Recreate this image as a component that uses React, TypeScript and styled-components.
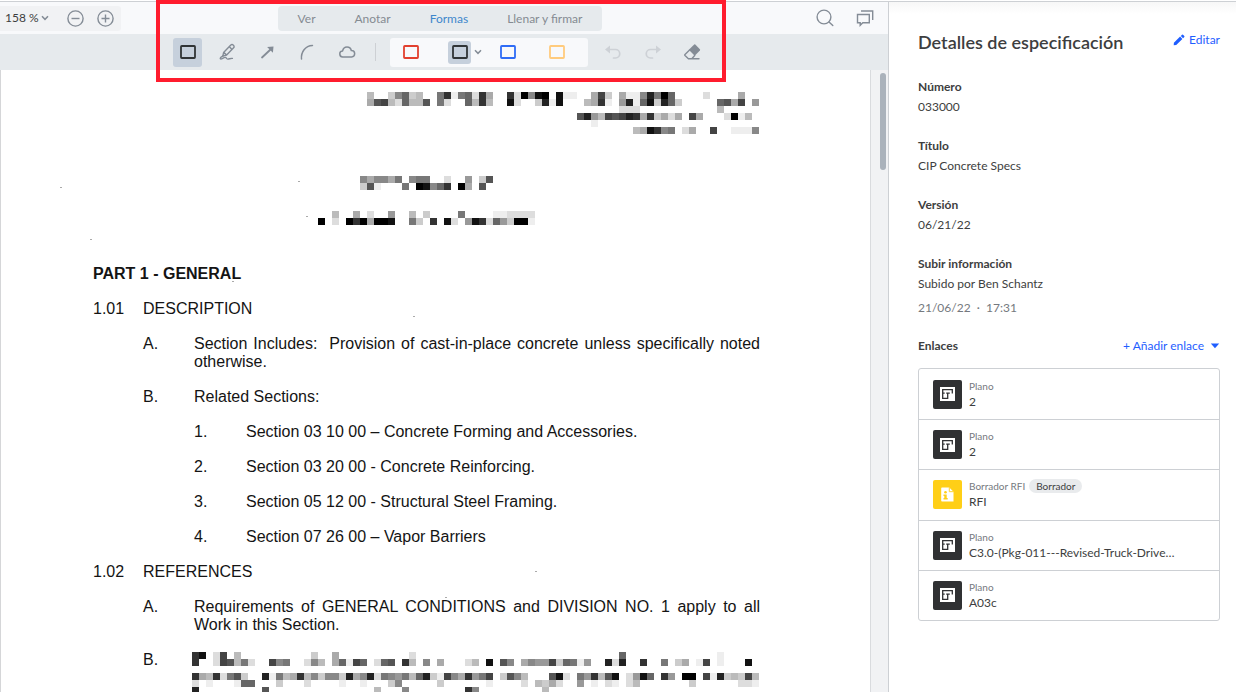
import React from "react";
import styled, { createGlobalStyle } from "styled-components";

const colors = {
  icon: "#848c96",
  iconOff: "#cdd1d6",
  ink: "#3d3e40",
  muted: "#75797e",
  link: "#1f5eff",
  bar: "#e6eaed",
  barLight: "#f8f9fb",
  line: "#cdd0d4",
  active: "#c6d0dc",
};

const Global = createGlobalStyle`
  * { box-sizing: border-box; }
  body { margin: 0; background: #fff; color: ${colors.ink}; font-family: Lato, "Noto Sans", sans-serif; font-size: 12px; line-height: 16px; }
  button { border: 0; padding: 0; background: none; font: inherit; color: inherit; cursor: pointer; }
  svg { display: block; flex: none; }
  h1, h2, h3, p, dl, dd, ul, ol { margin: 0; padding: 0; }
  ul, ol { list-style: none; }
`;

const Shell = styled.div`
  display: grid;
  grid-template-columns: minmax(0, 1fr) 348px;
  height: 100vh;
  padding: 1px 0 5px;
`;

const Viewer = styled.main`
  position: relative;
  display: flex;
  flex-direction: column;
  min-height: 0;
  border-top: 1px solid ${colors.line};
`;

const TopBar = styled.header`
  display: flex;
  align-items: center;
  height: 32px;
  padding-right: 8px;
  background: ${colors.barLight};
`;

const Side = styled.div`
  display: flex;
  flex: 1;
  align-items: center;
`;

const Actions = styled(Side)`
  gap: 22px;
  justify-content: flex-end;
  & > :last-child { margin-right: 6px; }
`;

const ZoomGroup = styled.div`
  display: flex;
  align-items: center;
  height: 25px;
  padding: 0 7px 0 5px;
  border-radius: 0 3px 3px 0;
  background: #f1f2f4;
`;

const ZoomLevel = styled.button`
  display: flex;
  align-items: center;
  gap: 2px;
  margin-right: 18px;
  white-space: nowrap;
`;

const ZoomStep = styled.button`
  width: 17px;
  height: 17px;
  & + & { margin-left: 13px; }
`;

const Tabs = styled.nav`
  display: flex;
  gap: 39px;
  align-items: center;
  height: 25px;
  padding: 1px 20px 0;
  border-radius: 4px;
  background: ${colors.bar};
`;

const Tab = styled.button<{ $on?: boolean }>`
  color: ${(p) => (p.$on ? "#3e87cc" : "#858b92")};
  white-space: nowrap;
`;

const ToolBar = styled.div`
  display: flex;
  align-items: center;
  justify-content: center;
  height: 36px;
  padding-right: 8px;
  background: ${colors.bar};
`;

const ToolSet = styled.div`
  display: flex;
  gap: 11px;
`;

const Tool = styled.button<{ $on?: boolean }>`
  display: grid;
  place-items: center;
  width: 29px;
  height: 29px;
  border-radius: 3px;
  background: ${(p) => (p.$on ? colors.active : "transparent")};
`;

const Separator = styled.span`
  width: 1px;
  height: 18px;
  margin: 0 14px 0 13px;
  background: ${colors.line};
`;

const Palette = styled.div`
  display: flex;
  align-items: center;
  gap: 26px;
  height: 29px;
  margin-right: 10px;
  padding: 0 20px 0 9px;
  border-radius: 3px;
  background: ${colors.barLight};
`;

const SwatchPick = styled.div`
  display: flex;
  align-items: center;
  gap: 3px;
  margin-right: -12px;
`;

const SwatchButton = styled.button<{ $on?: boolean }>`
  display: grid;
  place-items: center;
  width: 23px;
  height: 23px;
  border-radius: 3px;
  background: ${(p) => (p.$on ? colors.active : "transparent")};
`;

const Highlight = styled.div`
  position: absolute;
  top: -2px;
  left: calc(50% - 288px);
  width: 570px;
  height: 82px;
  border: 4px solid #ff1c2e;
  pointer-events: none;
`;

const DocumentArea = styled.div`
  display: flex;
  flex: 1;
  min-height: 0;
  border-left: 1px solid #d5d6d8;
`;

const Sheet = styled.article`
  position: relative;
  flex: 1;
  overflow: hidden;
  padding: 22px 110px 0 92px;
  color: #141414;
  font: 16px/18px "Liberation Sans", Arial, sans-serif;
`;

const Specks = styled.svg`
  position: absolute;
  top: 0;
  left: 0;
`;

const ScrollTrack = styled.div`
  width: 18px;
  padding: 3px 2px 0 9px;
  border-left: 1px solid #d9dbde;
  background: #f1f2f4;
`;

const ScrollThumb = styled.div`
  width: 6px;
  height: 97px;
  border-radius: 3px;
  background: #aab2bb;
`;

const Letterhead = styled.div`
  display: flex;
  flex-direction: column;
  align-items: flex-end;
  padding-right: 1px;
`;

const TitleBlock = styled.div`
  display: flex;
  flex-direction: column;
  align-items: center;
  gap: 21px;
  padding: 42px 0 40px;
`;

const PartTitle = styled.h2`
  font-size: 16px;
  line-height: 18px;
  font-weight: 700;
`;

const Clause = styled.div<{ $level: number }>`
  display: grid;
  grid-template-columns: ${(p) => (p.$level === 0 ? "50px" : p.$level === 1 ? "51px" : "52px")} minmax(0, 1fr);
  margin-top: 17px;
  padding-left: ${(p) => [0, 50, 101][p.$level]}px;
  text-align: justify;
`;

const Redacted = styled.div`
  padding-top: 1px;
  margin-left: -2px;
`;

const Panel = styled.aside`
  border-top: 1px solid ${colors.line};
  border-left: 1px solid ${colors.line};
  padding: 28px 16px 0 29px;
  background: linear-gradient(#f7f7f7, #fff 12px);
`;

const PanelHead = styled.div`
  display: flex;
  align-items: flex-start;
  justify-content: space-between;
  height: 49px;
`;

const PanelTitle = styled.h1`
  font-size: 18px;
  line-height: 24px;
  font-weight: 600;
  white-space: nowrap;
`;

const LinkButton = styled.button<{ $gap: number }>`
  display: flex;
  align-items: center;
  gap: ${(p) => p.$gap}px;
  padding: 2px 0;
  color: ${colors.link};
  white-space: nowrap;
`;

const Field = styled.div`
  & + & { margin-top: 23px; }
`;

const Term = styled.dt`
  margin-bottom: 4px;
  font-weight: 700;
`;

const Value = styled.dd<{ $muted?: boolean }>`
  color: ${(p) => (p.$muted ? colors.muted : colors.ink)};
  & + & { margin-top: 8px; }
`;

const LinksHead = styled.div`
  display: flex;
  align-items: center;
  justify-content: space-between;
  margin: 20px 0 12px;
`;

const LinksTitle = styled.h3`
  font-size: 12px;
  line-height: 16px;
  font-weight: 700;
`;

const LinkList = styled.ul`
  display: grid;
  grid-auto-rows: 1fr;
  min-height: 253px;
  border: 1px solid ${colors.line};
  border-radius: 3px;
`;

const LinkRow = styled.li`
  display: flex;
  align-items: center;
  gap: 7px;
  min-width: 0;
  padding: 0 14px;
  & + & { border-top: 1px solid ${colors.line}; }
`;

const Tile = styled.span<{ $color: string }>`
  display: grid;
  flex: none;
  place-items: center;
  width: 29px;
  height: 29px;
  border-radius: 2px;
  background: ${(p) => p.$color};
`;

const LinkText = styled.div`
  min-width: 0;
`;

const Kind = styled.div`
  display: flex;
  align-items: center;
  gap: 4px;
  margin-bottom: 1px;
  color: ${colors.muted};
  font-size: 10px;
  line-height: 14px;
`;

const Badge = styled.span`
  padding: 0 7px;
  border-radius: 7px;
  background: #e9ebed;
  color: ${colors.ink};
`;

const LinkName = styled.a`
  display: block;
  color: inherit;
  text-decoration: none;
  white-space: nowrap;
`;

/* Pixelated redaction: one hex digit per 7px cell, "f" is blank paper. */
const CELL = 7;
function Mosaic({ rows, label }: { rows: string[]; label: string }) {
  const columns = Math.max(...rows.map((r) => r.length));
  return (
    <svg width={columns * CELL} height={rows.length * CELL} shapeRendering="crispEdges" role="img" aria-label={label}>
      {rows.flatMap((row, y) =>
        [...row].map((c, x) =>
          c === "f" ? null : (
            <rect key={`${x}-${y}`} x={x * CELL} y={y * CELL} width={CELL} height={CELL} fill={`#${c.repeat(3)}`} />
          ),
        ),
      )}
    </svg>
  );
}

const blank = (n: number) => "f".repeat(n);

const letterhead = [
  "bffc86cbff73e76d3aff3d0810f1eeffa4cfaee82706ffffdffffaff",
  "a54bd6bb5f7dff6b3bff1dffc2e1fffba3ef92e61c26cfffff65a4f9",
  blank(36) + "ddd" + blank(11) + "bfffff",
  blank(30) + "529b45423a3cadaf4afffd0ebf",
  blank(32) + "e" + blank(23),
  blank(38) + "ba1387fdaff4ffeee8",
];
const titleLine = ["8a88a7f877ffdff9fc5", "c5efff7f01863f0af5f"];
const subtitleLine = ["ffbffafdff9ffbfcffff7ffffeedddd", "0fdf030a001ff7cf3f1df913d69c00e"];
const paragraph = [
  "31fd4fb" + blank(10) + "cffa" + blank(10) + "d" + blank(29) + "6" + blank(13) + "efffff",
  "3ffd45b7dff487ffd8bfa6e46fd65f3bf8fafffdbf1f58fa8994c67e9ff2d2ff3ff7fcafe4fefff1f",
  blank(81),
  "3ab3d75cff2e7ba3b8c88c2a82d7897b62ce48a3974fc58bfff51df793b51fd916f39f00f4e2cbc4b",
  "dfefffe66fffcfffdffffeffefffc8fffffcffffffeffffdfbcadff9fefdefdbfffffffcffffffdde".slice(0, 81),
  "2" + blank(9) + "5" + blank(15) + "b" + "fff" + "8" + blank(8) + "38" + blank(9) + "b",
].map((row) => row.padEnd(81, "f"));

const Chevron = () => (
  <svg width="8" height="6" viewBox="0 0 8 6" fill="none" stroke={colors.icon} strokeWidth="1.5">
    <path d="M1 1.2 4 4.3 7 1.2" />
  </svg>
);

const Step = ({ plus }: { plus?: boolean }) => (
  <svg width="17" height="17" viewBox="0 0 17 17" fill="none" stroke={colors.icon} strokeWidth="1.4">
    <circle cx="8.5" cy="8.5" r="7.6" />
    <path d={plus ? "M4.5 8.5h8M8.5 4.5v8" : "M4.5 8.5h8"} />
  </svg>
);

const Swatch = ({ color }: { color: string }) => (
  <svg width="16" height="14" viewBox="0 0 16 14" fill="none" stroke={color} strokeWidth="1.8">
    <rect x="1" y="1" width="14" height="12" rx="0.8" />
  </svg>
);

const Stroke = ({ children }: { children: React.ReactNode }) => (
  <svg width="18" height="18" viewBox="0 0 18 18" fill="none" stroke={colors.icon} strokeWidth="1.4" strokeLinecap="round" strokeLinejoin="round">
    {children}
  </svg>
);

const ScribbleIcon = () => (
  <Stroke>
    <path d="M4.6 9.6 11.8 2.1a1.6 1.6 0 0 1 2.4 0l.4.4a1.6 1.6 0 0 1 0 2.3L7.6 12l-3.8 1.2zM10.4 3.8l2.6 2.6M5 9.6l2.6 2.4" />
    <path d="M4 12.8C1.9 14 .8 15 1.4 15.8c.9 1.1 3.1-1.6 5-1.4 1.2.2.9 1.6 2.2 1.7 1.5.1 2.8-.9 4.8-.7" />
  </Stroke>
);

const ArrowIcon = () => (
  <Stroke>
    <path d="M3 14.5 11.5 6.5" strokeWidth="1.8" />
    <path d="M8.1 4 14.5 3.4 13.9 9.8z" fill={colors.icon} stroke="none" />
  </Stroke>
);

const ArcIcon = () => (
  <Stroke>
    <path d="M2.5 16C1.8 9 6.3 2.7 13.5 2.4" strokeWidth="1.5" />
  </Stroke>
);

const CloudIcon = () => (
  <Stroke>
    <path d="M4 13.9a3 3 0 0 1-.4-6C4.1 5.4 5.7 3.9 8 3.9c2.2 0 3.9 1.5 4.3 3.6a3.2 3.2 0 0 1 .3 6.4z" strokeWidth="1.5" />
  </Stroke>
);

const UndoIcon = ({ flip }: { flip?: boolean }) => (
  <svg width="18" height="18" viewBox="0 0 18 18" fill="none" stroke={colors.iconOff} strokeWidth="1.7" strokeLinecap="round">
    <g transform={flip ? "matrix(-1 0 0 1 18 0)" : undefined}>
      <path d="M5 6.5h6.500a4.200 4.200 0 0 1 0 8.500H9.500" />
      <path d="M1 6.500 6 2.400v8.200z" fill={colors.iconOff} stroke="none" />
    </g>
  </svg>
);

const EraserIcon = () => (
  <Stroke>
    <path d="M4.8 6.8 10.2 1.6a.8.8 0 0 1 1.1 0l4.6 4.7a.8.8 0 0 1 0 1.1l-5.2 5.3z" fill={colors.icon} stroke="none" />
    <path d="M5.3 7.2 1 11.4a.8.8 0 0 0 0 1.1l3.4 3.2h3.4l2.9-3.1M7 15.8h8" />
  </Stroke>
);

const SearchIcon = () => (
  <Stroke>
    <circle cx="8" cy="8" r="6.9" />
    <path d="m13 13 3.8 3.6" />
  </Stroke>
);

const CommentsIcon = () => (
  <Stroke>
    <path d="M1.500 5.500h11.800v8.300H6.800L4.200 16.300v-2.500H1.500zM5 2h11.700v9" strokeLinecap="butt" strokeLinejoin="miter" />
  </Stroke>
);

const PencilIcon = () => (
  <svg width="12" height="12" viewBox="0 0 12 12" fill={colors.link}>
    <path d="M.7 11.300.9 8.800 7.100 2.600l2.300 2.300-6.200 6.200zM7.800 1.900 9 .7q.5-.4 1 0l1.300 1.300q.4.5 0 1L10.100 4.200z" />
  </svg>
);

const CaretIcon = () => (
  <svg width="10" height="6" viewBox="0 0 10 6" fill={colors.link}>
    <path d="M.8.5h8.400L5 5.300z" />
  </svg>
);

const PlanIcon = () => (
  <svg width="15" height="14" viewBox="0 0 15 14" fill="none" stroke="#303133" strokeWidth="1.3">
    <rect width="15" height="14" fill="#fff" stroke="none" />
    <path d="M12.3 6.5V2.7H2.7v8.6h5V6.2M2.7 6.2h2M6.2 6.2h3.6" />
  </svg>
);

const RfiIcon = () => (
  <svg width="13" height="15" viewBox="0 0 13 15">
    <path d="M1 .5h7.3L12.5 4.7V14.5H1a.8.8 0 0 1-.8-.8V1.3A.8.8 0 0 1 1 .5z" fill="#fff" />
    <path d="M8.3.5v4.2h4.2" fill="none" stroke="#ffcf17" strokeWidth=".9" />
    <circle cx="4.5" cy="5.3" r="1.3" fill="#ffcf17" />
    <path d="M2.5 7.5h3.2v3.6h1v1.4H2.5v-1.4h.8V8.9h-.8z" fill="#ffcf17" />
  </svg>
);

const tools = [
  { name: "Rectángulo", icon: <Swatch color="#303436" />, on: true },
  { name: "Lápiz", icon: <ScribbleIcon /> },
  { name: "Flecha", icon: <ArrowIcon /> },
  { name: "Arco", icon: <ArcIcon /> },
  { name: "Nube", icon: <CloudIcon /> },
];

const fields = [
  { term: "Número", value: "033000" },
  { term: "Título", value: "CIP Concrete Specs" },
  { term: "Versión", value: "06/21/22" },
];

const links = [
  { kind: "Plano", name: "2" },
  { kind: "Plano", name: "2" },
  { kind: "Borrador RFI", name: "RFI", badge: "Borrador" },
  { kind: "Plano", name: "C3.0-(Pkg-011---Revised-Truck-Drive…" },
  { kind: "Plano", name: "A03c" },
];

const clauses = [
  { level: 0, mark: "1.01", text: "DESCRIPTION" },
  { level: 1, mark: "A.", text: "Section Includes:\u00a0 Provision of cast-in-place concrete unless specifically noted otherwise." },
  { level: 1, mark: "B.", text: "Related Sections:" },
  { level: 2, mark: "1.", text: "Section 03 10 00 – Concrete Forming and Accessories." },
  { level: 2, mark: "2.", text: "Section 03 20 00 - Concrete Reinforcing." },
  { level: 2, mark: "3.", text: "Section 05 12 00 - Structural Steel Framing." },
  { level: 2, mark: "4.", text: "Section 07 26 00 – Vapor Barriers" },
  { level: 0, mark: "1.02", text: "REFERENCES" },
  { level: 1, mark: "A.", text: "Requirements of GENERAL CONDITIONS and DIVISION NO. 1 apply to all Work in this Section." },
];

/* Scanner dust on the page. */
const specks = [[59, 117], [297, 111], [305, 146], [89, 169], [412, 246], [231, 211], [534, 501], [444, 527]];

export default function App() {
  return (
    <>
      <Global />
      <Shell>
        <Viewer>
          <TopBar>
            <Side>
              <ZoomGroup>
                <ZoomLevel aria-label="Nivel de zoom">158 % <Chevron /></ZoomLevel>
                <ZoomStep aria-label="Alejar"><Step /></ZoomStep>
                <ZoomStep aria-label="Acercar"><Step plus /></ZoomStep>
              </ZoomGroup>
            </Side>
            <Tabs>
              {["Ver", "Anotar", "Formas", "Llenar y firmar"].map((t) => (
                <Tab key={t} $on={t === "Formas"}>{t}</Tab>
              ))}
            </Tabs>
            <Actions>
              <button aria-label="Buscar"><SearchIcon /></button>
              <button aria-label="Comentarios"><CommentsIcon /></button>
            </Actions>
          </TopBar>
          <ToolBar>
            <ToolSet>
              {tools.map((t) => (
                <Tool key={t.name} aria-label={t.name} $on={t.on}>{t.icon}</Tool>
              ))}
            </ToolSet>
            <Separator />
            <Palette>
              <SwatchButton aria-label="Rojo"><Swatch color="#e2402f" /></SwatchButton>
              <SwatchPick>
                <SwatchButton aria-label="Negro" $on><Swatch color="#303436" /></SwatchButton>
                <button aria-label="Más colores"><Chevron /></button>
              </SwatchPick>
              <SwatchButton aria-label="Azul"><Swatch color="#2f6cf6" /></SwatchButton>
              <SwatchButton aria-label="Amarillo"><Swatch color="#ffcb7d" /></SwatchButton>
            </Palette>
            <ToolSet>
              <Tool aria-label="Deshacer"><UndoIcon /></Tool>
              <Tool aria-label="Rehacer"><UndoIcon flip /></Tool>
              <Tool aria-label="Borrar"><EraserIcon /></Tool>
            </ToolSet>
          </ToolBar>
          <DocumentArea>
            <Sheet>
              <Specks width="560" height="540" fill="#aaa" aria-hidden="true">
                {specks.map(([x, y]) => <rect key={`${x}-${y}`} x={x} y={y} width="2" height="1" />)}
              </Specks>
              <Letterhead><Mosaic rows={letterhead} label="Membrete oculto" /></Letterhead>
              <TitleBlock>
                <Mosaic rows={titleLine} label="Título oculto" />
                <Mosaic rows={subtitleLine} label="Subtítulo oculto" />
              </TitleBlock>
              <PartTitle>PART 1 - GENERAL</PartTitle>
              {clauses.map((c) => (
                <Clause key={c.mark + c.text} $level={c.level}>
                  <span>{c.mark}</span>
                  <p>{c.text}</p>
                </Clause>
              ))}
              <Clause $level={1}>
                <span>B.</span>
                <Redacted><Mosaic rows={paragraph} label="Párrafo oculto" /></Redacted>
              </Clause>
            </Sheet>
            <ScrollTrack><ScrollThumb /></ScrollTrack>
          </DocumentArea>
          <Highlight />
        </Viewer>
        <Panel>
          <PanelHead>
            <PanelTitle>Detalles de especificación</PanelTitle>
            <LinkButton $gap={4}><PencilIcon />Editar</LinkButton>
          </PanelHead>
          <dl>
            {fields.map((f) => (
              <Field key={f.term}>
                <Term>{f.term}</Term>
                <Value>{f.value}</Value>
              </Field>
            ))}
            <Field>
              <Term>Subir información</Term>
              <Value>Subido por Ben Schantz</Value>
              <Value $muted>21/06/22 &nbsp;·&nbsp; 17:31</Value>
            </Field>
          </dl>
          <LinksHead>
            <LinksTitle>Enlaces</LinksTitle>
            <LinkButton $gap={6}>+ Añadir enlace<CaretIcon /></LinkButton>
          </LinksHead>
          <LinkList>
            {links.map((l, i) => (
              <LinkRow key={i}>
                <Tile $color={l.badge ? "#ffcf17" : "#303133"}>{l.badge ? <RfiIcon /> : <PlanIcon />}</Tile>
                <LinkText>
                  <Kind>{l.kind}{l.badge && <Badge>{l.badge}</Badge>}</Kind>
                  <LinkName href="#">{l.name}</LinkName>
                </LinkText>
              </LinkRow>
            ))}
          </LinkList>
        </Panel>
      </Shell>
    </>
  );
}
